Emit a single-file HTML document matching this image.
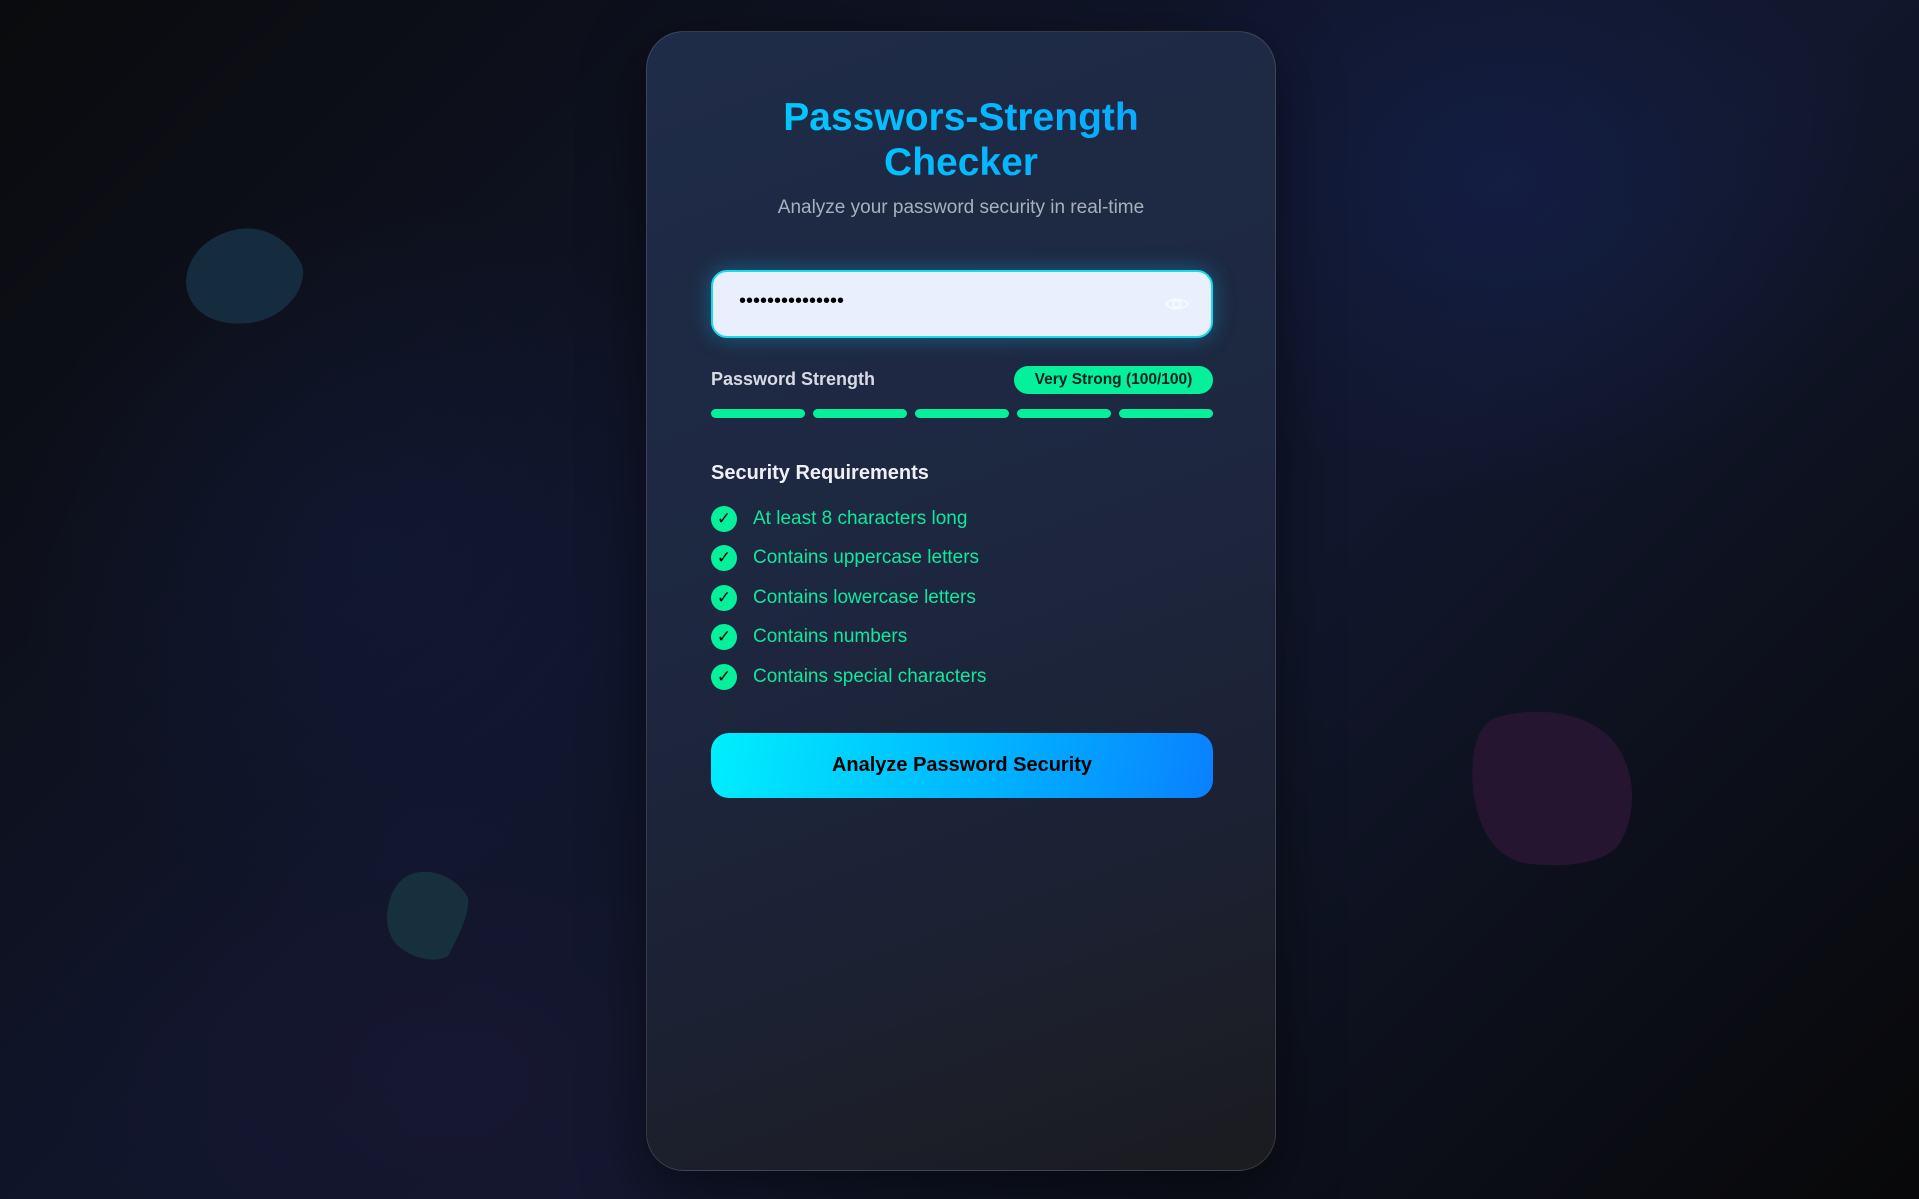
<!DOCTYPE html>
<html><head><meta charset="utf-8"><style>
html,body{margin:0;width:1919px;height:1199px;overflow:hidden;font-family:"Liberation Sans",sans-serif;}
body{background:
radial-gradient(ellipse 560px 460px at 1500px 180px, rgba(22,38,95,0.45), transparent 70%),
radial-gradient(ellipse 520px 520px at 380px 560px, rgba(22,34,80,0.3), transparent 70%),
radial-gradient(ellipse 600px 450px at 450px 1080px, rgba(30,24,55,0.45), transparent 70%),
linear-gradient(135deg,#0a0b0d 0%,#10152a 40%,#11172c 60%,#080809 100%);position:relative;}
.blob{position:absolute;}
.card{position:absolute;left:646px;top:31px;width:628px;height:1138px;border-radius:38px;border:1px solid rgba(255,255,255,0.13);
background:linear-gradient(160deg,#1f2c48 0%,#1d2740 45%,#1c2132 75%,#1b1b1f 100%);box-shadow:0 20px 60px rgba(0,0,0,0.5);}
.abs{position:absolute;}
h1{position:absolute;left:0;width:100%;top:63px;margin:0;text-align:center;font-size:39px;line-height:45px;font-weight:bold;
background:linear-gradient(90deg,#00d2ff,#0aa0ff);-webkit-background-clip:text;color:transparent;}
.sub{left:0;width:100%;top:165px;text-align:center;color:#a9b0bd;font-size:19px;}
.input{left:64px;top:238px;width:498px;height:64px;border:2px solid #17d9f0;border-radius:16px;background:#e9effc;box-shadow:0 0 22px rgba(0,210,255,0.35);}
.dots{position:absolute;left:26px;top:18px;font-size:20px;color:#000;}
.label{left:64px;top:337px;color:#d6dae2;font-size:18px;font-weight:bold;}
.badge{left:367px;top:334px;width:199px;height:28px;border-radius:14px;background:#05f09a;font-size:15.5px;font-weight:bold;text-align:center;line-height:28px;color:#022;}
.bar{top:377px;height:9px;width:94px;border-radius:5px;background:#06f09c;}
.req{left:64px;top:430px;color:#eef0f4;font-size:20px;font-weight:bold;}
.item{left:64px;height:26px;color:#10e89a;font-size:19px;line-height:26px;}
.item span.c{display:inline-block;width:26px;height:26px;border-radius:50%;background:#05f09a;color:#000;text-align:center;font-size:17px;line-height:26px;vertical-align:top;margin-right:16px;}
.btn{left:64px;top:701px;width:502px;height:65px;border-radius:18px;background:linear-gradient(100deg,#00effe,#00b4ff 55%,#0a80ff);color:#000;text-align:center;line-height:65px;font-size:20px;font-weight:bold;}
</style></head><body>
<svg class="blob" style="left:180px;top:225px" width="130" height="105"><path d="M60 4 C90 0 112 20 122 40 C128 58 110 92 70 98 C30 102 8 84 6 58 C6 30 30 8 60 4Z" fill="#163042" opacity="0.9"/></svg>
<svg class="blob" style="left:380px;top:868px" width="95" height="98"><path d="M40 4 C60 2 80 14 88 30 C90 44 78 70 68 88 C55 96 30 90 16 76 C2 60 6 30 18 16 C24 8 32 5 40 4Z" fill="#173340" opacity="0.9"/></svg>
<svg class="blob" style="left:1465px;top:708px" width="180" height="165"><path d="M30 10 C60 0 110 0 140 25 C170 50 175 100 155 135 C140 158 90 160 60 155 C30 150 12 120 8 80 C5 45 12 18 30 10Z" fill="#2a1634" opacity="0.85"/></svg>
<div class="card">
<h1>Passwors-Strength<br>Checker</h1>
<div class="abs sub">Analyze your password security in real-time</div>
<div class="abs input"><div class="dots">•••••••••••••••</div>
<svg style="position:absolute;right:22px;top:24px" width="24" height="16" viewBox="0 0 24 16"><path d="M1 8 C5 2 19 2 23 8 C19 14 5 14 1 8Z" fill="none" stroke="#f6f9ff" stroke-width="2"/><circle cx="12" cy="8" r="3.5" fill="none" stroke="#f6f9ff" stroke-width="2"/></svg></div>
<div class="abs label">Password Strength</div>
<div class="abs badge">Very Strong (100/100)</div>
<div class="abs bar" style="left:64px"></div>
<div class="abs bar" style="left:166px"></div>
<div class="abs bar" style="left:268px"></div>
<div class="abs bar" style="left:370px"></div>
<div class="abs bar" style="left:472px"></div>
<div class="abs req">Security Requirements</div>
<div class="abs item" style="top:474px"><span class="c">✓</span>At least 8 characters long</div>
<div class="abs item" style="top:513px"><span class="c">✓</span>Contains uppercase letters</div>
<div class="abs item" style="top:553px"><span class="c">✓</span>Contains lowercase letters</div>
<div class="abs item" style="top:592px"><span class="c">✓</span>Contains numbers</div>
<div class="abs item" style="top:632px"><span class="c">✓</span>Contains special characters</div>
<div class="abs btn">Analyze Password Security</div>
</div>
</body></html>
